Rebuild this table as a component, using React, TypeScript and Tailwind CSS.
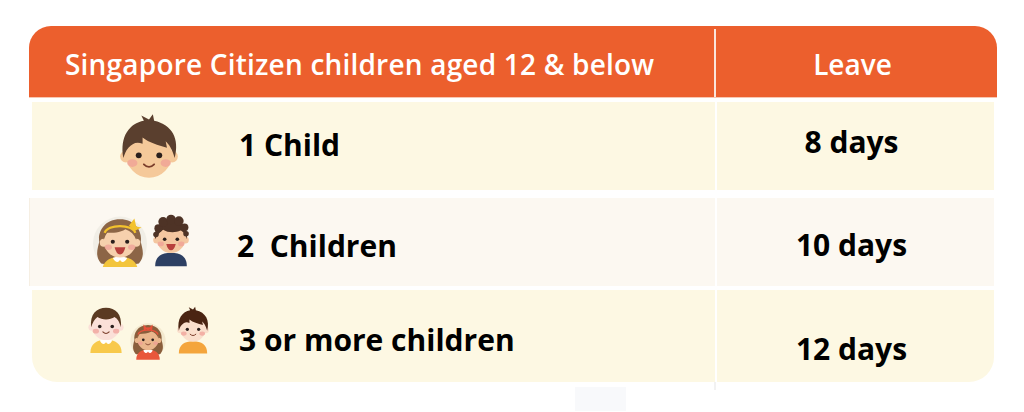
import React from "react";

type KidProps = {
  w: number;
  h: number;
  viewBox?: string;
  skin: string;
  hair: string;
  hairType: "spiky" | "curly" | "bowl" | "long";
  shirt?: string;
  collar?: string;
  mouth?: "smile" | "open";
  accessory?: { kind: "headband" | "bow"; color: string };
  circle?: string;
};

const Kid = ({
  w,
  h,
  viewBox = "0 0 60 70",
  skin,
  hair,
  hairType,
  shirt,
  collar,
  mouth = "smile",
  accessory,
  circle,
}: KidProps) => (
  <svg width={w} height={h} viewBox={viewBox}>
    {circle && <circle cx="30" cy="38" r="30" fill={circle} />}
    {hairType === "long" && (
      <path
        d="M9,60 C2,52 5,44 7,36 C5,26 12,11 30,11 C48,11 55,26 53,36 C55,44 58,52 51,60 C44,62 16,62 9,60 Z"
        fill={hair}
      />
    )}
    {shirt && (
      <path d="M10,70 C10,58 18,53 30,53 C42,53 50,58 50,70 Z" fill={shirt} />
    )}
    {collar && (
      <path d="M22,54 C25,60 29,59 30,56 C31,59 35,60 38,54 C35,52 25,52 22,54 Z" fill={collar} />
    )}
    <circle cx="12" cy="37" r="4.5" fill={skin} />
    <circle cx="48" cy="37" r="4.5" fill={skin} />
    <ellipse cx="30" cy="35" rx="18" ry="18.5" fill={skin} />
    {hairType === "spiky" && (
      <path
        d="M10,38 C7,21 15,11 26,9 L24,5 L30,8 L33,4 L34,9 C48,12 54,23 50,38 C48,31 46,28 43,25 L44,30 C37,28 30,26 25,22 L25,27 C20,25 17,27 14,30 C12,32 11,35 10,38 Z"
        fill={hair}
      />
    )}
    {hairType === "bowl" && (
      <path
        d="M11,37 C9,20 18,12 30,12 C42,12 51,20 49,37 C47,29 44,26 41,24 C35,28 25,28 19,24 C15,27 13,31 11,37 Z"
        fill={hair}
      />
    )}
    {hairType === "curly" && (
      <g fill={hair}>
        <path d="M10,36 C8,22 16,12 30,12 C44,12 52,22 50,36 C48,29 45,26 42,25 C36,28 26,28 20,24 C16,27 12,31 10,36 Z" />
        <circle cx="14" cy="22" r="5" />
        <circle cx="20" cy="14" r="6" />
        <circle cx="30" cy="11" r="6" />
        <circle cx="40" cy="13" r="6" />
        <circle cx="47" cy="21" r="5" />
        <circle cx="11" cy="30" r="3.5" />
        <circle cx="49" cy="29" r="3.5" />
      </g>
    )}
    {hairType === "long" && (
      <path
        d="M12,34 C11,20 19,14 30,14 C41,14 49,20 48,34 C46,28 42,24 36,22 C30,26 22,26 16,26 C14,28 13,31 12,34 Z"
        fill={hair}
      />
    )}
    {accessory?.kind === "headband" && (
      <g>
        <path d="M13,26 C16,16 44,16 47,26" stroke={accessory.color} strokeWidth="2.6" fill="none" />
        <path d="M40,18 L46,10 L48,19 L54,20 L46,24 Z" fill={accessory.color} />
      </g>
    )}
    {accessory?.kind === "bow" && (
      <g>
        <path d="M13,27 C16,17 44,17 47,27" stroke={accessory.color} strokeWidth="2.4" fill="none" />
        <path d="M30,17 L22,10 L23,20 Z M30,17 L38,10 L37,20 Z" fill={accessory.color} />
        <circle cx="30" cy="17" r="2.4" fill={accessory.color} />
      </g>
    )}
    <ellipse cx="17" cy="42" rx="4" ry="3" fill="#ef9d95" opacity="0.7" />
    <ellipse cx="43" cy="42" rx="4" ry="3" fill="#ef9d95" opacity="0.7" />
    <circle cx="22" cy="36" r="2.3" fill="#2a1f1c" />
    <circle cx="38" cy="36" r="2.3" fill="#2a1f1c" />
    {mouth === "smile" ? (
      <path d="M26,43 Q30,47 34,43" stroke="#7a3d2a" strokeWidth="1.4" fill="none" strokeLinecap="round" />
    ) : (
      <path d="M24,42 Q30,42 36,42 Q34,50 30,50 Q26,50 24,42 Z" fill="#b8403c" />
    )}
  </svg>
);

const rows = [
  { label: "1 Child", leave: "8 days", bg: "bg-[#fdf8e3]" },
  { label: "2\u00a0 Children", leave: "10 days", bg: "bg-[#fcf8f1]" },
  { label: "3 or more children", leave: "12 days", bg: "bg-[#fdf8e3]" },
];

const Icons = ({ i }: { i: number }) => {
  if (i === 0) {
    return (
      <div className="mt-[1px]">
        <Kid w={62} h={68} viewBox="6 3 48 53" skin="#f5c99a" hair="#5a3f2e" hairType="spiky" />
      </div>
    );
  }
  if (i === 1) {
    return (
      <div className="flex items-start gap-[5px] mt-[-4px] ml-[-10px]">
        <Kid
          w={54}
          h={54}
          viewBox="0 4 60 60"
          skin="#f6d0ad"
          hair="#8c6546"
          hairType="long"
          shirt="#f3c53c"
          collar="#ffffff"
          mouth="open"
          circle="#f1eee6"
          accessory={{ kind: "headband", color: "#f3c22d" }}
        />
        <Kid
          w={38}
          h={54}
          viewBox="6 4 48 66"
          skin="#f4c6a0"
          hair="#4e3326"
          hairType="curly"
          shirt="#2d3f63"
          mouth="open"
        />
      </div>
    );
  }
  return (
    <div className="flex items-start mt-[-4px]">
      <Kid w={38} h={50} viewBox="6 6 48 64" skin="#fbe0d8" hair="#5b3a22" hairType="bowl" shirt="#f8c94b" collar="#ffffff" />
      <div className="ml-[3px] mt-[13px]">
        <Kid
          w={40}
          h={50}
          viewBox="-4 6 68 64"
          skin="#eab68c"
          hair="#8a5e3c"
          hairType="long"
          shirt="#e9573c"
          collar="#ffffff"
          circle="#f3e9cf"
          accessory={{ kind: "bow", color: "#e8513a" }}
        />
      </div>
      <div className="ml-[8px] mt-[2px]">
        <Kid w={34} h={50} viewBox="6 4 48 66" skin="#fadfcc" hair="#4a2412" hairType="spiky" shirt="#f4a53c" />
      </div>
    </div>
  );
};

export default function App() {
  return (
    <div className="w-[1024px] h-[412px] bg-white overflow-hidden font-['Open_Sans',sans-serif]">
      <div className="pt-[26px] pl-[29px] w-[997px]">
        <div className="flex h-[71px] rounded-t-[22px] bg-[#ec5f2d] text-white">
          <div className="w-[685px] flex items-center pl-[36px] text-[28px] font-semibold pt-[4px] tracking-[0.2px]">
            Singapore Citizen children aged 12 &amp; below
          </div>
          <div className="w-[2px] mt-[3px] bg-[#fbe4da]" />
          <div className="flex-1 flex items-center justify-center pr-[8px] text-[28px] font-semibold pt-[4px]">
            Leave
          </div>
        </div>
        <div className="h-px bg-[#f8c7b2]" />
        <div className="flex flex-col gap-[8px] pt-[4px] pl-[3px] pr-[3px]">
          {rows.map((r, i) => (
            <div
              key={r.label}
              className={
                "flex " +
                (i === 0 ? "h-[88px]" : i === 1 ? "h-[88px] -ml-[3px]" : "h-[92px] -mt-[4px]")
              }
            >
              <div
                className={
                  "flex items-center " +
                  r.bg +
                  (i === 1 ? " w-[686px] border-l border-[#f6efe3]" : " w-[683px]") +
                  (i === 2 ? " rounded-bl-[25px]" : "")
                }
              >
                <div className="w-[207px] flex justify-center pl-[26px]">
                  <Icons i={i} />
                </div>
                <div
                  className={
                    "text-[30px] font-bold text-black " +
                    (i === 0 ? "-mt-[4px]" : i === 1 ? "mt-[6px]" : "mt-[6px]")
                  }
                >
                  {r.label}
                </div>
              </div>
              <div className="w-[2px]" />
              <div
                className={
                  "flex-1 flex items-center justify-center pr-[8px] " +
                  r.bg +
                  (i === 2 ? " rounded-br-[25px]" : "")
                }
              >
                <div
                  className={
                    "text-[30px] font-bold text-black " +
                    (i === 0 ? "-mt-[10px]" : i === 1 ? "mt-[4px]" : "mt-[24px]")
                  }
                >
                  {r.leave}
                </div>
              </div>
            </div>
          ))}
        </div>
        <div className="flex">
          <div className="w-[546px]" />
          <div className="w-[51px] h-[24px] mt-[5px] bg-[#f8f9fb]" />
          <div className="w-[88px]" />
          <div className="w-[2px] h-[8px] bg-[#f2f2f2]" />
        </div>
      </div>
    </div>
  );
}
